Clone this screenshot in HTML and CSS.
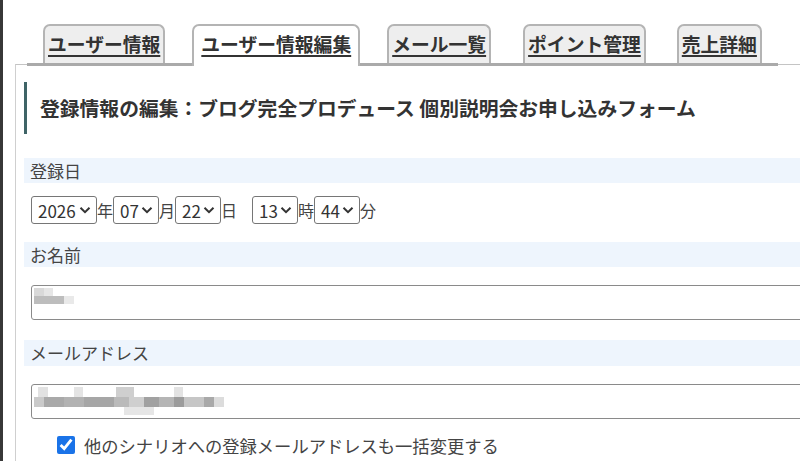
FILE: index.html
```html
<!DOCTYPE html>
<html lang="ja">
<head>
<meta charset="utf-8">
<title>ユーザー情報編集</title>
<link rel="stylesheet" href="styles.css">
</head>
<body>
<div class="page">
  <nav class="tabs">
    <a class="tab t1">ユーザー情報</a>
    <a class="tab t2 active">ユーザー情報編集</a>
    <a class="tab t3">メール一覧</a>
    <a class="tab t4">ポイント管理</a>
    <a class="tab t5">売上詳細</a>
  </nav>
  <main class="panel">
    <h1 class="title">登録情報の編集：ブログ完全プロデュース 個別説明会お申し込みフォーム</h1>

    <div class="label">登録日</div>
    <div class="date-row">
      <span class="sel w-year">2026<svg class="chev" width="12" height="8" viewBox="0 0 12 8"><path d="M1.5 1.8 L6 6.2 L10.5 1.8" fill="none" stroke="#333" stroke-width="2"/></svg></span><span class="unit">年</span><span class="sel">07<svg class="chev" width="12" height="8" viewBox="0 0 12 8"><path d="M1.5 1.8 L6 6.2 L10.5 1.8" fill="none" stroke="#333" stroke-width="2"/></svg></span><span class="unit">月</span><span class="sel">22<svg class="chev" width="12" height="8" viewBox="0 0 12 8"><path d="M1.5 1.8 L6 6.2 L10.5 1.8" fill="none" stroke="#333" stroke-width="2"/></svg></span><span class="unit">日</span><span class="sel hour">13<svg class="chev" width="12" height="8" viewBox="0 0 12 8"><path d="M1.5 1.8 L6 6.2 L10.5 1.8" fill="none" stroke="#333" stroke-width="2"/></svg></span><span class="unit">時</span><span class="sel">44<svg class="chev" width="12" height="8" viewBox="0 0 12 8"><path d="M1.5 1.8 L6 6.2 L10.5 1.8" fill="none" stroke="#333" stroke-width="2"/></svg></span><span class="unit">分</span>
    </div>

    <div class="label l2">お名前</div>
    <div class="input">
      <span class="blur-name"></span>
    </div>

    <div class="label l3">メールアドレス</div>
    <div class="input">
      <span class="blur-mail"></span>
    </div>

    <label class="check-row">
      <input type="checkbox" checked>
      <span>他のシナリオへの登録メールアドレスも一括変更する</span>
    </label>
  </main>
</div>
</body>
</html>
```

FILE: styles.css
```css
html, body {
  margin: 0;
  padding: 0;
  height: 100%;
}
body {
  background: #fff;
  font-family: "Noto Sans CJK JP", "Noto Sans", sans-serif;
  color: #444;
  overflow: hidden;
}
.page {
  box-sizing: border-box;
  height: 100%;
  border-left: 3px solid #383838;
  padding-top: 24px;
  overflow: hidden;
}

/* tabs */
.tabs {
  position: relative;
  z-index: 1;
  display: flex;
  align-items: flex-end;
  margin-left: 24px;
  width: 735px;
  height: 39px;
  padding-left: 16px;
  border-bottom: 3px solid #aaa;
}
.tab {
  box-sizing: border-box;
  height: 39px;
  padding: 0 3px 3px;
  display: flex;
  align-items: center;
  background: #eee;
  border: 2px solid #b4b4b4;
  border-bottom: 0;
  border-radius: 7px 7px 0 0;
  font-size: 18.8px;
  font-weight: bold;
  color: #333;
  text-decoration: underline;
  text-decoration-thickness: 1.5px;
  text-underline-offset: 3px;
  white-space: nowrap;
}
.tab.active {
  height: 42px;
  margin-bottom: -3px;
  padding: 0 7px 6px;
  background: #fff;
}
.t2, .t3 { margin-left: 27px; }
.t4 { margin-left: 32px; }
.t5 { margin-left: 31px; }

/* panel */
.panel {
  margin-left: 12px;
  margin-top: -2px;
  width: 850px;
  height: 420px;
  border-left: 1px solid #cfcfcf;
  border-top: 1px solid #c4c4c4;
  padding-top: 17px;
}
.title {
  margin: 0 0 0 8px;
  height: 52px;
  line-height: 51px;
  border-left: 3px solid #3f6467;
  padding-left: 13px;
  font-size: 19.8px;
  font-weight: bold;
  color: #333;
  white-space: nowrap;
}
.label {
  margin: 24px 0 0 8px;
  height: 25px;
  line-height: 25px;
  padding-left: 6px;
  background: #eef5fd;
  font-size: 17px;
  color: #444;
}
.label.l2 { margin-top: 18px; }
.label.l3 { margin-top: 20px; height: 26px; line-height: 26px; }

.date-row {
  display: flex;
  align-items: center;
  margin-top: 13px;
  padding-left: 15px;
  height: 28px;
}
.sel {
  box-sizing: border-box;
  display: flex;
  align-items: center;
  justify-content: space-between;
  width: 46px;
  height: 28px;
  padding: 0 5px 0 6px;
  border: 1px solid #767676;
  border-radius: 3px;
  font-size: 17px;
  color: #333;
  background: #fff;
}
.sel.w-year { width: 66px; }
.sel.hour { margin-left: 15px; }
.chev { flex: none; }
.unit {
  font-size: 16px;
  color: #444;
  width: 16px;
  text-align: center;
}

.input {
  box-sizing: border-box;
  margin: 18px 0 0 15px;
  height: 35px;
  border: 1px solid #8a8a8a;
  border-radius: 3px;
  padding: 2px 0 0 2px;
  background: #fff;
}
.blur-name {
  display: block;
  width: 40px;
  height: 16px;
  background:
    linear-gradient(#d9d9d9, #d9d9d9) 0 0 / 10px 8px no-repeat,
    linear-gradient(#e6e6e6, #e6e6e6) 10px 0 / 9px 8px no-repeat,
    linear-gradient(#bdbdbd, #bdbdbd) 0 8px / 30px 8px no-repeat,
    linear-gradient(#e9e9e9, #e9e9e9) 30px 8px / 10px 8px no-repeat;
}
.blur-mail {
  display: block;
  width: 190px;
  height: 28px;
  background:
    linear-gradient(#e2e2e2, #e2e2e2) 4px 0 / 10px 10px no-repeat,
    linear-gradient(#e4e4e4, #e4e4e4) 40px 0 / 9px 10px no-repeat,
    linear-gradient(#cfcfcf, #cfcfcf) 82px 0 / 18px 10px no-repeat,
    linear-gradient(#e3e3e3, #e3e3e3) 140px 0 / 9px 10px no-repeat,
    linear-gradient(#e6e6e6, #e6e6e6) 90px 20px / 30px 8px no-repeat,
    linear-gradient(90deg,
      #cacaca 0 10px, #a9a9a9 10px 30px, #b2b2b2 30px 50px, #a6a6a6 50px 80px,
      #bababa 80px 95px, #cfcfcf 95px 110px, #a1a1a1 110px 125px, #b5b5b5 125px 140px,
      #9c9c9c 140px 150px, #c6c6c6 150px 170px, #a9a9a9 170px 180px, #dcdcdc 180px 190px)
      0 10px / 190px 10px no-repeat;
}

.check-row {
  display: flex;
  align-items: center;
  margin: 16px 0 0 41px;
  height: 20px;
  font-size: 17.3px;
  color: #444;
}
.check-row input {
  width: 18px;
  height: 18px;
  margin: 0 9px 0 0;
  accent-color: #1a73e8;
}
```
